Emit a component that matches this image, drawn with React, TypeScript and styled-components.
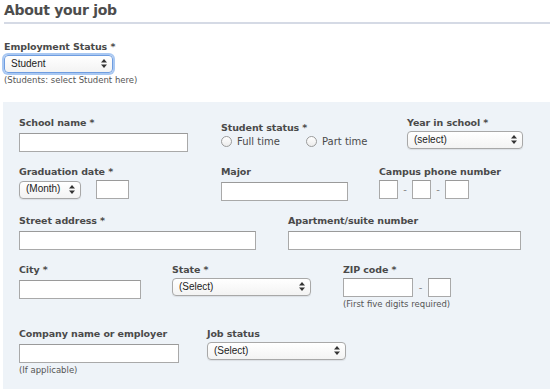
import React from 'react';
import styled, { createGlobalStyle } from 'styled-components';

const GlobalStyle = createGlobalStyle`
  body {
    margin: 0;
    background: #fff;
    font-family: 'DejaVu Sans', Verdana, sans-serif;
    color: #4a4a4a;
  }
`;

const Page = styled.div`
  width: 550px;
  height: 389px;
  overflow: hidden;
`;

const Heading = styled.h2`
  margin: 0 0 0 4px;
  padding: 1px 0 3px 0;
  font-size: 14px;
  letter-spacing: -0.3px;
  line-height: 18px;
  font-weight: bold;
  color: #4d4d4d;
  border-bottom: 2px solid #d5dae5;
`;

const Intro = styled.div`
  padding: 16px 0 0 4px;
  height: 62px;
`;

const Label = styled.div<{ $offset?: number }>`
  font-size: 9.5px;
  letter-spacing: -0.1px;
  line-height: 13px;
  font-weight: bold;
  color: #4a4a4a;
  margin-top: ${(p) => p.$offset ?? 0}px;
  margin-bottom: 2px;
  white-space: nowrap;
`;

const Hint = styled.div`
  font-size: 8.5px;
  line-height: 11px;
  color: #555;
  margin-top: 2px;
  white-space: nowrap;
`;

const Panel = styled.div`
  margin-left: 3px;
  background: #eef3f8;
  padding: 14px 0 20px 16px;
`;

const Row = styled.div<{ $gap?: number }>`
  display: flex;
  align-items: flex-start;
  margin-bottom: ${(p) => p.$gap ?? 13}px;
`;

const Field = styled.div<{ $width?: number }>`
  flex: ${(p) => (p.$width ? `0 0 ${p.$width}px` : '1 1 auto')};
`;

const Inline = styled.div`
  display: flex;
  align-items: center;
`;

const TextBox = styled.input<{ $w: number }>`
  box-sizing: border-box;
  width: ${(p) => p.$w}px;
  height: 19px;
  margin: 0;
  padding: 0 3px;
  border: 1px solid #a9a9a9;
  border-top-color: #9a9a9a;
  background: #fff;
  font-size: 10px;
  outline: none;
`;

const Dash = styled.span<{ $w: number }>`
  display: inline-block;
  width: ${(p) => p.$w}px;
  text-align: center;
  font-size: 10px;
  color: #888;
`;

const SelectWrap = styled.div<{ $w: number; $focus?: boolean }>`
  position: relative;
  box-sizing: border-box;
  width: ${(p) => p.$w}px;
  height: 18px;
  border: 1px solid ${(p) => (p.$focus ? '#6f9de0' : '#a8a8a8')};
  border-radius: 4px;
  background: linear-gradient(#ffffff, #f3f3f3);
  box-shadow: ${(p) => (p.$focus ? '0 0 0 2px #a9c8f2' : '0 1px 1px rgba(0,0,0,0.08)')};
`;

const NativeSelect = styled.select`
  appearance: none;
  -webkit-appearance: none;
  display: block;
  width: 100%;
  height: 16px;
  line-height: 14px;
  border: none;
  background: transparent;
  margin: 0;
  padding: 0 14px 1px 6px;
  font-family: 'Liberation Sans', Arial, sans-serif;
  font-size: 10px;
  color: #222;
  outline: none;
`;

const Arrows = styled.svg`
  position: absolute;
  right: 5px;
  top: 3px;
  pointer-events: none;
`;

const RadioGroup = styled.div`
  display: flex;
  align-items: center;
`;

const RadioItem = styled.label<{ $w?: number }>`
  display: inline-flex;
  align-items: center;
  width: ${(p) => (p.$w ? `${p.$w}px` : 'auto')};
  font-size: 10px;
  color: #4a4a4a;
`;

const RadioCircle = styled.input`
  appearance: none;
  -webkit-appearance: none;
  width: 11px;
  height: 11px;
  margin: 0 5px 0 0;
  border: 1px solid #9b9b9b;
  border-radius: 50%;
  background: linear-gradient(#fff, #ececec);
`;

function Select({ w, value, focus }: { w: number; value: string; focus?: boolean }) {
  return (
    <SelectWrap $w={w} $focus={focus}>
      <NativeSelect defaultValue={value}>
        <option>{value}</option>
      </NativeSelect>
      <Arrows width="6" height="9" viewBox="0 0 6 9">
        <path d="M3 0 L6 3.5 H0 Z" fill="#333" />
        <path d="M3 9 L6 5.5 H0 Z" fill="#333" />
      </Arrows>
    </SelectWrap>
  );
}

export default function App() {
  return (
    <Page>
      <GlobalStyle />
      <Heading>About your job</Heading>
      <Intro>
        <Label>Employment Status *</Label>
        <Select w={109} value="Student" focus />
        <Hint>(Students: select Student here)</Hint>
      </Intro>
      <Panel>
        <Row>
          <Field $width={202}>
            <Label>School name *</Label>
            <TextBox $w={169} />
          </Field>
          <Field $width={186}>
            <Label $offset={5}>Student status *</Label>
            <RadioGroup>
              <RadioItem $w={85}>
                <RadioCircle type="radio" name="status" />
                Full time
              </RadioItem>
              <RadioItem>
                <RadioCircle type="radio" name="status" />
                Part time
              </RadioItem>
            </RadioGroup>
          </Field>
          <Field>
            <Label>Year in school *</Label>
            <Select w={116} value="(select)" />
          </Field>
        </Row>
        <Row>
          <Field $width={202}>
            <Label>Graduation date *</Label>
            <Inline>
              <Select w={62} value="(Month)" />
              <Dash $w={15} />
              <TextBox $w={33} />
            </Inline>
          </Field>
          <Field $width={158}>
            <Label>Major</Label>
            <TextBox $w={127} />
          </Field>
          <Field>
            <Label>Campus phone number</Label>
            <Inline>
              <TextBox $w={19} />
              <Dash $w={14}>-</Dash>
              <TextBox $w={19} />
              <Dash $w={14}>-</Dash>
              <TextBox $w={24} />
            </Inline>
          </Field>
        </Row>
        <Row>
          <Field $width={269}>
            <Label>Street address *</Label>
            <TextBox $w={237} />
          </Field>
          <Field>
            <Label>Apartment/suite number</Label>
            <TextBox $w={233} />
          </Field>
        </Row>
        <Row $gap={17}>
          <Field $width={153}>
            <Label>City *</Label>
            <TextBox $w={122} />
          </Field>
          <Field $width={171}>
            <Label>State *</Label>
            <Select w={139} value="(Select)" />
          </Field>
          <Field>
            <Label>ZIP code *</Label>
            <Inline>
              <TextBox $w={70} />
              <Dash $w={15}>-</Dash>
              <TextBox $w={23} />
            </Inline>
            <Hint>(First five digits required)</Hint>
          </Field>
        </Row>
        <Row>
          <Field $width={188}>
            <Label>Company name or employer</Label>
            <TextBox $w={160} />
            <Hint>(If applicable)</Hint>
          </Field>
          <Field>
            <Label>Job status</Label>
            <Select w={139} value="(Select)" />
          </Field>
        </Row>
      </Panel>
    </Page>
  );
}
